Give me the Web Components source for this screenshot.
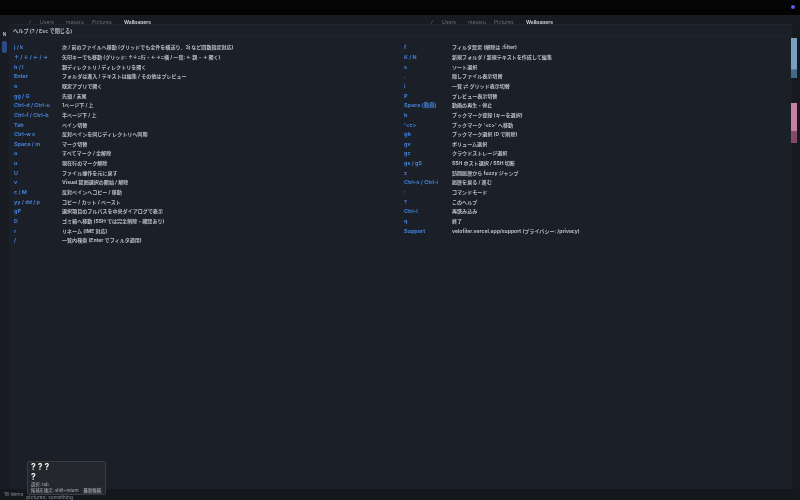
<!DOCTYPE html>
<html lang="ja"><head><meta charset="utf-8">
<style>
html,body{margin:0;padding:0;width:800px;height:500px;overflow:hidden;background:#16191e;}
body{font-family:"Inter","Noto Sans CJK JP",sans-serif;}
</style></head><body>
<file-app></file-app>
<template id="t-app">
<style>
:host{display:flex;flex-direction:column;width:800px;height:500px;position:relative;overflow:hidden;background:#16191e;filter:blur(.35px);}
.black{height:15px;flex:none;background:#040405;position:relative;}
.dot{position:absolute;right:5px;top:5px;width:4px;height:4px;border-radius:50%;background:#5b5bf0;}
.tabs{height:9px;flex:none;display:grid;grid-template-columns:1fr 1fr;background:#181b21;}
.main{flex:1;min-height:0;display:flex;padding-right:8px;}
.rail{width:9px;flex:none;display:flex;flex-direction:column;align-items:center;background:#181b21;}
.rail b{font-size:4.6px;color:#b9bdc5;margin-top:8px;line-height:6px;}
.rail i{display:block;width:5.5px;height:12px;border-radius:2px;background:#2b4d86;margin-top:3px;}
.body{flex:1;min-width:0;}
status-bar{height:11px;flex:none;background:#14171b;}
</style>
<div class="black"><span class="dot"></span></div>
<div class="tabs"><path-tabs pad="29"></path-tabs><path-tabs pad="31"></path-tabs></div>
<div class="main"><div class="rail"><b>N</b><i></i></div><div class="body"><help-panel></help-panel></div></div>
<status-bar></status-bar>
<side-bars></side-bars>
<ime-pop></ime-pop>
</template>
<template id="t-tabs">
<style>:host{display:grid;grid-template-columns:11px 26px 26px 32px auto;justify-content:start;font-size:5.1px;line-height:8px;color:#666c77;white-space:nowrap;overflow:hidden;height:9px;}
span{position:relative;top:3px}
b{position:relative;top:3px;color:#c4c7cd;font-weight:700;font-size:4.9px}</style>
<span>/</span><span>Users</span><span>masaru</span><span>Pictures</span><b>Wallpapers</b>
</template>
<template id="t-help">
<style>
:host{display:block;height:100%;background:#1b1f27;box-sizing:border-box;padding:0;border-top:1px solid #20242c;}
h1{margin:0;padding:2px 0 0 4px;height:12px;box-sizing:border-box;font-size:5.2px;line-height:9px;font-weight:700;color:#b8bbc2;border-bottom:1px solid #20242c;}
.cols{display:grid;grid-template-columns:390px 1fr;padding:6.4px 0 0 5px;}
</style>
<h1>ヘルプ (? / Esc で閉じる)</h1>
<div class="cols"><div><slot name="l"></slot></div><div><slot name="r"></slot></div></div>
</template>
<template id="t-row">
<style>
:host{display:grid;grid-template-columns:48px 1fr;height:9.65px;line-height:9.65px;white-space:nowrap;}
.k{color:#4481d8;font-weight:700;font-size:5.4px}
.d{color:#bcbfc6;font-weight:700;font-size:5.05px}
</style>
<span class="k"></span><span class="d"></span>
</template>
<template id="t-bars">
<style>
:host{position:absolute;left:791px;top:38px;width:6px;display:flex;flex-direction:column;gap:25px;}
i{display:block;width:6px;height:40px;}
.a{background:linear-gradient(172deg,#74a0c4 0 76%,#3f6a88 80% 100%);}
.b{background:linear-gradient(#c97fa4 0 70%,#84486a 70% 100%);}
</style><i class="a"></i><i class="b"></i>
</template>
<template id="t-status">
<style>:host{display:flex;gap:3px;padding-left:4px;font-size:5px;line-height:11px;color:#858a93;white-space:nowrap;}
.p{position:relative;top:2.5px}</style>
<span>16 items</span><span class="p">pictures: something</span>
</template>
<template id="t-ime">
<style>
:host{position:absolute;left:27px;top:461px;width:79px;height:33.5px;box-sizing:border-box;padding:0 3px;background:#23262b;border:1px solid #3a3d43;border-radius:2px;color:#b5b7bb;font-size:4.3px;line-height:6.4px;white-space:nowrap;}
.q{font-size:8.5px;font-weight:700;line-height:10px;color:#eee;}
.r{display:flex;gap:4px}
.r em{font-style:normal;background:#34373c;padding:0 1px;}
</style>
<div class="q">? ? ?</div><div class="q">?</div><div>選択: tab</div><div class="r"><span>候補を確定: shift+return</span><em>最新候補</em></div>
</template>
<script>
function def(name,tid,init){customElements.define(name,class extends HTMLElement{constructor(){super();this.attachShadow({mode:'open'}).appendChild(document.getElementById(tid).content.cloneNode(true));}connectedCallback(){init&&init(this);}});}
const L=[["j / k","次 / 前のファイルへ移動 (グリッドでも全件を横送り。3j など回数指定対応)"],["↑ / ↓ / ← / →","矢印キーでも移動 (グリッド: ↑↓=行・←→=横 / 一覧: ← 親・→ 開く)"],["h / l","親ディレクトリ / ディレクトリを開く"],["Enter","フォルダは進入 / テキストは編集 / その他はプレビュー"],["o","既定アプリで開く"],["gg / G","先頭 / 末尾"],["Ctrl-d / Ctrl-u","1ページ下 / 上"],["Ctrl-f / Ctrl-b","半ページ下 / 上"],["Tab","ペイン切替"],["Ctrl-w s","反対ペインを同じディレクトリへ同期"],["Space / m","マーク切替"],["a","すべてマーク / 全解除"],["u","現在行のマーク解除"],["U","ファイル操作を元に戻す"],["v","Visual 範囲選択の開始 / 解除"],["c / M","反対ペインへコピー / 移動"],["yy / dd / p","コピー / カット / ペースト"],["gP","選択項目のフルパスを中央ダイアログで表示"],["D","ゴミ箱へ移動 (SSH では完全削除・確認あり)"],["r","リネーム (IME 対応)"],["/","一覧内検索 (Enter でフィルタ適用)"]];
const R=[["f","フィルタ設定 (解除は :filter)"],["K / N","新規フォルダ / 新規テキストを作成して編集"],["s","ソート選択"],[".","隠しファイル表示切替"],["i","一覧 ⇄ グリッド表示切替"],["P","プレビュー表示切替"],["Space (動画)","動画の再生・停止"],["b","ブックマーク登録 (キーを選択)"],["'<c>","ブックマーク '<c>' へ移動"],["gb","ブックマーク選択 (D で削除)"],["gv","ボリューム選択"],["gc","クラウドストレージ選択"],["gs / gS","SSH ホスト選択 / SSH 切断"],["z","訪問履歴から fuzzy ジャンプ"],["Ctrl-o / Ctrl-i","履歴を戻る / 進む"],[":","コマンドモード"],["?","このヘルプ"],["Ctrl-l","再読み込み"],["q","終了"],["Support","velofiler.vercel.app/support (プライバシー: /privacy)"]];
def('path-tabs','t-tabs',e=>{e.style.paddingLeft=e.getAttribute('pad')+'px'});
def('help-row','t-row',e=>{const s=e.shadowRoot;s.querySelector('.k').textContent=e.dataset.k;s.querySelector('.d').textContent=e.dataset.d;});
def('help-panel','t-help',e=>{if(e.children.length)return;for(const[side,list]of[['l',L],['r',R]])for(const[k,d]of list){const r=document.createElement('help-row');r.slot=side;r.dataset.k=k;r.dataset.d=d;e.appendChild(r);}});
def('side-bars','t-bars');def('status-bar','t-status');def('ime-pop','t-ime');
def('file-app','t-app');
</script>
</body></html>
